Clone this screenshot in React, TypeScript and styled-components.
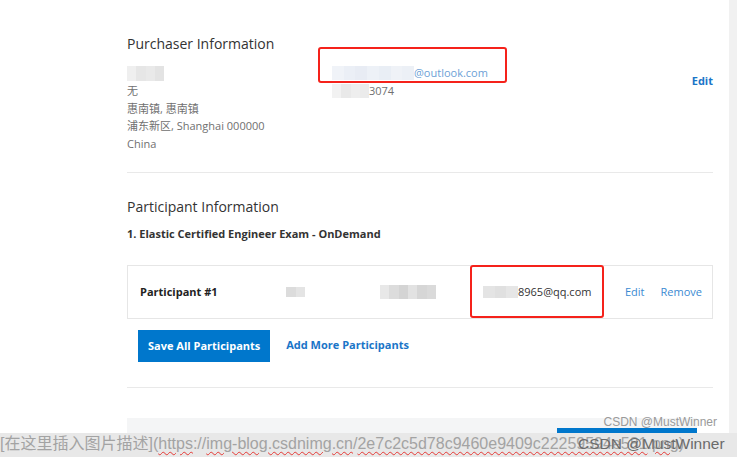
import React from "react";
import styled, { createGlobalStyle } from "styled-components";

const GlobalStyle = createGlobalStyle`
  html, body {
    margin: 0;
    padding: 0;
    background: #ffffff;
  }
  body {
    font-family: "Open Sans", "Noto Sans CJK SC", sans-serif;
    color: #333;
    overflow: hidden;
  }
`;

const Page = styled.div`
  display: flex;
  width: 737px;
  height: 457px;
  overflow: hidden;
  position: relative;
`;

const Main = styled.div`
  flex: 1;
  min-width: 0;
  padding: 0 16px 0 127px;
`;

const Scrollbar = styled.div`
  width: 8px;
  flex-shrink: 0;
  background: #f1f1f1;
`;

const Section = styled.section<{ $pt: number; $pb: number }>`
  padding-top: ${(p) => p.$pt}px;
  padding-bottom: ${(p) => p.$pb}px;
  border-bottom: 1px solid #e9e9e9;
`;

const Title = styled.h2`
  margin: 0;
  font-size: 14px;
  font-weight: 400;
  line-height: 20px;
  color: #333;
`;

const PurchaserGrid = styled.div`
  display: grid;
  grid-template-columns: 205px 1fr auto;
  margin-top: 10px;
`;

const Lines = styled.div`
  position: relative;
  font-size: 11px;
  line-height: 17.7px;
  color: #707070;
`;

const Line = styled.div<{ $h?: number }>`
  display: flex;
  align-items: center;
  height: ${(p) => p.$h ?? 17.7}px;
  white-space: nowrap;
`;

const Mail = styled.span`
  color: #6d9fd6;
`;

const BoldLink = styled.a`
  font-size: 11px;
  font-weight: 700;
  color: #1a75c8;
  text-decoration: none;
  align-self: start;
  margin-top: 9px;
`;

const Mosaic = styled.span<{ $w: number; $h: number }>`
  display: inline-flex;
  width: ${(p) => p.$w}px;
  height: ${(p) => p.$h}px;
  flex-shrink: 0;
`;

const Cell = styled.span<{ $c: string }>`
  flex: 1;
  background: ${(p) => p.$c};
`;

const Blur = ({ w, h, cells }: { w: number; h: number; cells: string[] }) => (
  <Mosaic $w={w} $h={h}>
    {cells.map((c, i) => (
      <Cell key={i} $c={c} />
    ))}
  </Mosaic>
);

const Highlight = styled.div<{ $l: number; $t: number; $w: number; $h: number }>`
  position: absolute;
  left: ${(p) => p.$l}px;
  top: ${(p) => p.$t}px;
  width: ${(p) => p.$w}px;
  height: ${(p) => p.$h}px;
  border: 2.5px solid #f5221b;
  border-radius: 3px;
  box-sizing: border-box;
  pointer-events: none;
`;

const Exam = styled.div`
  margin-top: 8px;
  font-size: 11px;
  font-weight: 700;
  line-height: 18px;
  color: #333;
`;

const ParticipantRow = styled.div`
  position: relative;
  display: flex;
  align-items: center;
  height: 54px;
  margin-top: 22px;
  padding-left: 12px;
  border: 1px solid #e6e6e6;
  box-sizing: border-box;
  font-size: 11px;
`;

const RowCell = styled.div<{ $w: number }>`
  width: ${(p) => p.$w}px;
  flex-shrink: 0;
  display: flex;
  align-items: center;
  white-space: nowrap;
`;

const RowLabel = styled(RowCell)`
  font-weight: 700;
  color: #222;
`;

const Email = styled(RowCell)`
  color: #333;
`;

const Actions = styled.div`
  display: flex;
  gap: 16px;
`;

const Action = styled.a`
  color: #3b8ad2;
  text-decoration: none;
`;

const Buttons = styled.div`
  display: flex;
  align-items: center;
  gap: 16px;
  margin-top: 11px;
  padding-left: 11px;
`;

const Primary = styled.button`
  height: 32px;
  padding: 0 10px;
  background: #0077cc;
  border: none;
  color: #fff;
  font-family: "Open Sans", sans-serif;
  font-size: 11px;
  font-weight: 700;
  cursor: pointer;
`;

const AddLink = styled.a`
  font-size: 11px;
  font-weight: 700;
  color: #1a75c8;
  text-decoration: none;
  margin-top: -2px;
`;

const Footer = styled.div`
  position: relative;
  margin-top: 30px;
  width: 570px;
  height: 40px;
  background: #f4f5f6;
`;

const FooterButton = styled.div`
  position: absolute;
  right: 0;
  top: 10px;
  width: 140px;
  height: 30px;
  background: #0077cc;
`;

const Watermark = styled.div`
  position: absolute;
  right: 20px;
  top: 415px;
  font-family: "Liberation Sans", Arial, sans-serif;
  font-size: 12px;
  color: #9a9a9a;
`;

const Caption = styled.div`
  position: absolute;
  left: 0;
  right: 0;
  bottom: 0;
  height: 24px;
  background: #e8e8e8;
  font-family: "Liberation Sans", Arial, "Noto Sans CJK SC", sans-serif;
  font-size: 16px;
  line-height: 22px;
  color: #a3a3a3;
  white-space: nowrap;
  overflow: hidden;
`;

const Squiggle = styled.span`
  text-decoration: underline wavy #e53935;
  text-decoration-thickness: 1px;
  text-underline-offset: 2px;
`;

const CaptionMark = styled.span`
  position: absolute;
  left: 578px;
  top: 0;
  font-size: 15.5px;
  color: #6b6b6b;
`;

const gA = ["#efefef", "#e6e6e6", "#e9e9e9", "#e3e3e3"];
const gB = ["#f0f3f8", "#ebeff6", "#e8ecf4", "#edf1f7", "#e9eef5", "#eff2f7", "#ecf0f6"];

export default function App() {
  return (
    <>
      <GlobalStyle />
      <Page>
        <Main>
          <Section $pt={34} $pb={19}>
            <Title>Purchaser Information</Title>
            <PurchaserGrid>
              <Lines>
                <Line $h={18}>
                  <Blur w={37} h={15} cells={gA} />
                </Line>
                <Line>无</Line>
                <Line>惠南镇, 惠南镇</Line>
                <Line>浦东新区, Shanghai 000000</Line>
                <Line>China</Line>
              </Lines>
              <Lines>
                <Line $h={18}>
                  <Blur w={82} h={14} cells={gB} />
                  <Mail>@outlook.com</Mail>
                </Line>
                <Line>
                  <Blur w={37} h={14} cells={["#f2f2f2", "#e9e9e9", "#eeeeee", "#ebebeb"]} />
                  3074
                </Line>
                <Highlight $l={-14} $t={-17} $w={189} $h={36} />
              </Lines>
              <BoldLink href="#">Edit</BoldLink>
            </PurchaserGrid>
          </Section>
          <Section $pt={24} $pb={25}>
            <Title>Participant Information</Title>
            <Exam>1. Elastic Certified Engineer Exam - OnDemand</Exam>
            <ParticipantRow>
              <RowLabel $w={146}>Participant #1</RowLabel>
              <RowCell $w={94}>
                <Blur w={19} h={10} cells={["#dcdcdc", "#e4e4e4"]} />
              </RowCell>
              <RowCell $w={103}>
                <Blur w={56} h={14} cells={["#e8e8e8", "#dcdcdc", "#d4d4d4", "#e2e2e2", "#d6d6d6", "#dadada"]} />
              </RowCell>
              <Email $w={142}>
                <Blur w={35} h={12} cells={["#e4e4e4", "#e0e0e0", "#e6e6e6"]} />
                8965@qq.com
              </Email>
              <Actions>
                <Action href="#">Edit</Action>
                <Action href="#">Remove</Action>
              </Actions>
              <Highlight $l={342} $t={-1} $w={134} $h={53} />
            </ParticipantRow>
            <Buttons>
              <Primary>Save All Participants</Primary>
              <AddLink href="#">Add More Participants</AddLink>
            </Buttons>
          </Section>
          <Footer>
            <FooterButton />
          </Footer>
        </Main>
        <Scrollbar />
        <Watermark>CSDN @MustWinner</Watermark>
        <Caption>
          [在这里插入图片描述](<Squiggle>https</Squiggle>://<Squiggle>img-blog.csdnimg.cn</Squiggle>/
          <Squiggle>2e7c2c5d78c9460e9409c22259594e581</Squiggle>.<Squiggle>png</Squiggle>)
          <CaptionMark>CSDN @MustWinner</CaptionMark>
        </Caption>
      </Page>
    </>
  );
}
